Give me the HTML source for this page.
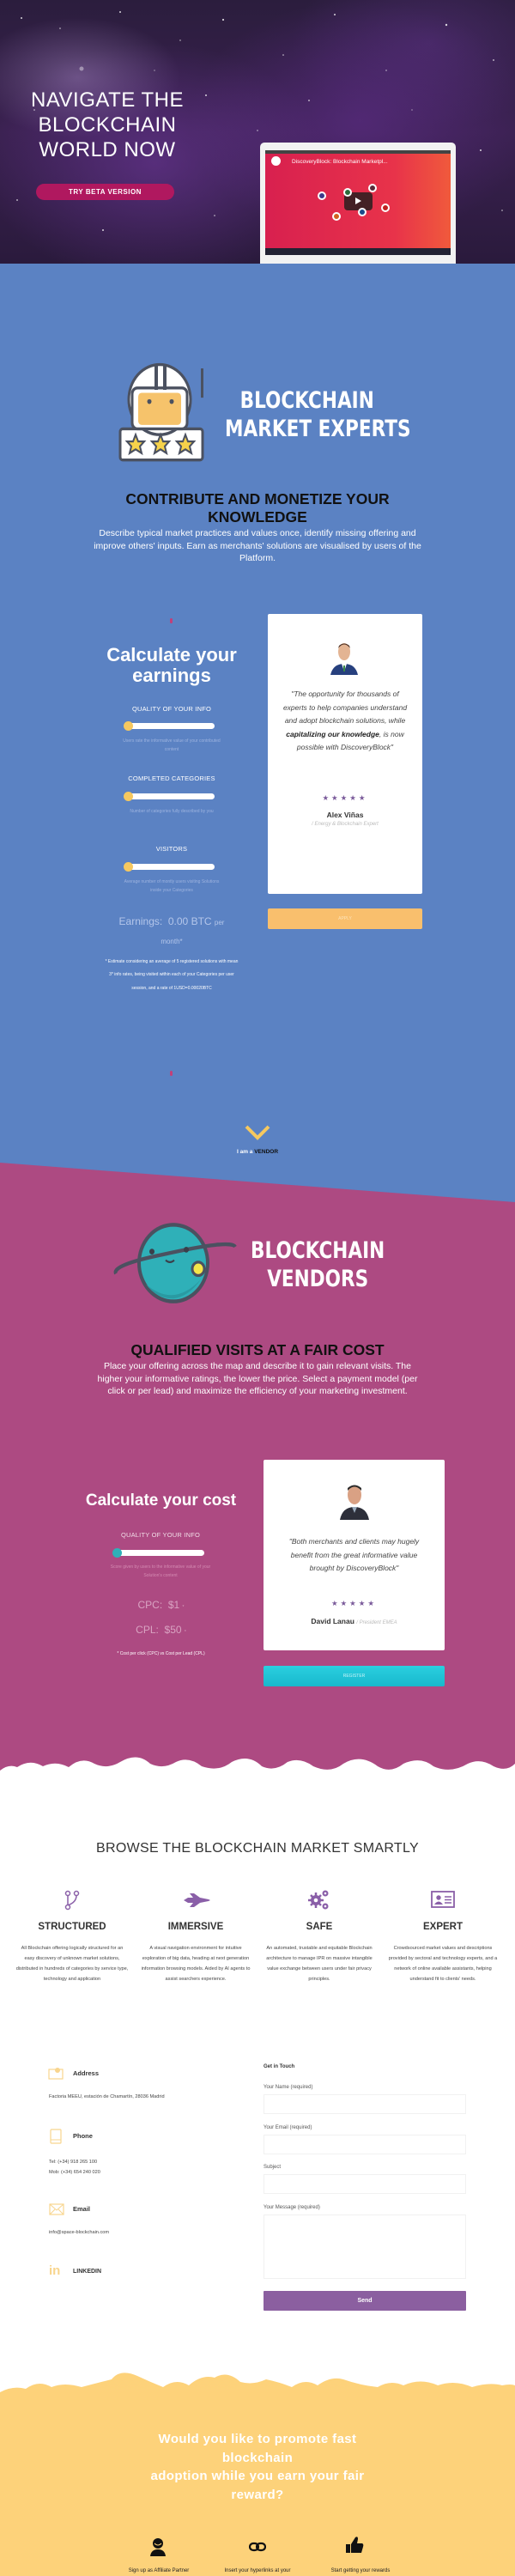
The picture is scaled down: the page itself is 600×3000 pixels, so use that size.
<!DOCTYPE html>
<html><head><meta charset="utf-8"><style>
*{margin:0;padding:0;box-sizing:border-box}
body{width:600px;height:3000px;position:relative;overflow:hidden;font-family:"Liberation Sans",sans-serif;background:#fff}
.a{position:absolute}
.c{text-align:center}
.slider{position:absolute;height:7px;background:#fff;border-radius:4px}
.slider i{position:absolute;left:-2px;top:-2px;width:11px;height:11px;border-radius:50%;background:#f6c85f}
.lbl{font-size:7.5px;color:#fff;letter-spacing:.2px}
.sm{font-size:5px;color:#9db3df;line-height:10px}
.inp{position:absolute;left:307px;width:236px;height:23px;border:1px solid #f1f1f1;background:#fff}
.fl{position:absolute;left:307px;font-size:6px;color:#555}
.hand{font-family:'DejaVu Sans',sans-serif;font-weight:bold;color:#fff;white-space:nowrap;transform-origin:0 0}
</style></head><body>

<!-- HERO -->
<div class="a" style="left:0;top:0;width:600px;height:307px;background:radial-gradient(ellipse 120px 70px at 90px 90px,rgba(170,140,200,.45),transparent),radial-gradient(ellipse 200px 140px at 180px 190px,rgba(120,60,170,.5),transparent),radial-gradient(ellipse 200px 140px at 420px 140px,rgba(110,50,160,.45),transparent),radial-gradient(ellipse 160px 100px at 500px 50px,rgba(90,50,130,.5),transparent),linear-gradient(#2b1d3d,#3a2150 50%,#2a1a3c)"></div>
<svg class="a" style="left:0;top:0" width="600" height="307">
<g fill="#fff" opacity=".8">
<circle cx="25" cy="21" r="1"/><circle cx="70" cy="33" r=".8"/><circle cx="140" cy="14" r="1"/><circle cx="210" cy="47" r=".7"/><circle cx="260" cy="23" r="1.1"/><circle cx="330" cy="64" r=".8"/><circle cx="390" cy="17" r="1"/><circle cx="450" cy="82" r=".7"/><circle cx="520" cy="29" r="1.2"/><circle cx="575" cy="70" r=".9"/><circle cx="40" cy="128" r=".8"/><circle cx="240" cy="111" r="1"/><circle cx="300" cy="152" r=".7"/><circle cx="560" cy="175" r="1"/><circle cx="20" cy="233" r=".9"/><circle cx="120" cy="268" r="1"/><circle cx="250" cy="251" r=".8"/><circle cx="585" cy="245" r=".8"/><circle cx="180" cy="82" r=".6"/><circle cx="360" cy="117" r=".9"/><circle cx="480" cy="128" r=".6"/><circle cx="95" cy="80" r="2.5" opacity=".5"/></g></svg>
<div class="a c" style="left:20px;top:102px;width:210px;color:#fff;font-size:24px;line-height:29px;letter-spacing:.5px">NAVIGATE THE<br>BLOCKCHAIN<br>WORLD NOW</div>
<div class="a c" style="left:42px;top:214px;width:161px;height:19px;border-radius:10px;background:#b0185f;color:#fff;font-size:8px;font-weight:bold;line-height:19px;letter-spacing:.5px">TRY BETA VERSION</div>
<!-- laptop -->
<div class="a" style="left:303px;top:166px;width:228px;height:143px;background:#f2f2f2;border-radius:5px 5px 0 0"></div>
<div class="a" style="left:275px;top:307px;width:284px;height:7px;background:#e4e4e4;border-radius:0 0 30px 30px"></div>
<div class="a" style="left:309px;top:175px;width:216px;height:122px;background:linear-gradient(90deg,#d8204f,#e8334a 70%,#f05a3c)"></div>
<div class="a" style="left:309px;top:175px;width:216px;height:4px;background:#444"></div>
<div class="a" style="left:309px;top:289px;width:216px;height:8px;background:#223"></div>
<div class="a" style="left:316px;top:182px;width:11px;height:11px;border-radius:50%;background:#fff"></div>
<div class="a" style="left:340px;top:185px;color:#fff;font-size:6.5px;white-space:nowrap">DiscoveryBlock: Blockchain Marketpl...</div>
<div class="a" style="left:401px;top:224px;width:33px;height:21px;border-radius:4px;background:rgba(40,30,30,.85)"></div>
<div class="a" style="left:414px;top:230px;width:0;height:0;border-left:7px solid #fff;border-top:4.5px solid transparent;border-bottom:4.5px solid transparent"></div>
<svg class="a" style="left:309px;top:175px" width="216" height="115"><g fill="#fff"><circle cx="66" cy="53" r="5"/><circle cx="96" cy="49" r="5"/><circle cx="125" cy="44" r="5"/><circle cx="83" cy="77" r="5"/><circle cx="113" cy="72" r="5"/><circle cx="140" cy="67" r="5"/></g><g><circle cx="66" cy="53" r="3" fill="#3b3a8a"/><circle cx="96" cy="49" r="3" fill="#2a6a3a"/><circle cx="125" cy="44" r="3" fill="#5a2a3a"/><circle cx="83" cy="77" r="3" fill="#d06020"/><circle cx="113" cy="72" r="3" fill="#1a4a8a"/><circle cx="140" cy="67" r="3" fill="#c02020"/></g></svg>

<!-- BLUE SECTION -->
<div class="a" style="left:0;top:307px;width:600px;height:1100px;background:#5b82c3"></div>
<svg class="a" style="left:136px;top:420px" width="106" height="118" viewBox="0 0 106 104" preserveAspectRatio="none">
<rect x="4" y="70" width="96" height="32" rx="3" fill="#fff" stroke="#4b5160" stroke-width="3"/>
<rect x="98" y="8" width="3" height="30" fill="#4b5160"/>
<ellipse cx="50" cy="40" rx="36" ry="36" fill="#fff" stroke="#4b5160" stroke-width="3"/>
<rect x="18" y="28" width="64" height="42" rx="6" fill="#fff" stroke="#4b5160" stroke-width="3"/>
<rect x="25" y="33" width="50" height="33" rx="4" fill="#f6c36b"/>
<rect x="44" y="4" width="4" height="26" fill="#4b5160"/><rect x="54" y="4" width="4" height="26" fill="#4b5160"/>
<circle cx="38" cy="42" r="2.5" fill="#4b5160"/><circle cx="64" cy="42" r="2.5" fill="#4b5160"/>
<g fill="#f6d24a" stroke="#4b5160" stroke-width="2"><polygon points="22,76 25,83 32,83 27,88 29,95 22,91 15,95 17,88 12,83 19,83"/><polygon points="51,76 54,83 61,83 56,88 58,95 51,91 44,95 46,88 41,83 48,83"/><polygon points="80,76 83,83 90,83 85,88 87,95 80,91 73,95 75,88 70,83 77,83"/></g>
</svg>
<div class="a hand" style="left:262px;top:450px;font-size:27px;line-height:33px;transform:scaleX(.8)"><span style="padding-left:22px">BLOCKCHAIN</span><br>MARKET EXPERTS</div>
<div class="a c" style="left:80px;top:571px;width:440px;font-weight:bold;font-size:17.5px;line-height:21px;color:#111">CONTRIBUTE AND MONETIZE YOUR<br>KNOWLEDGE</div>
<div class="a c" style="left:106px;top:614px;width:388px;font-size:10.5px;line-height:14.5px;color:#fff">Describe typical market practices and values once, identify missing offering and improve others' inputs. Earn as merchants' solutions are visualised by users of the Platform.</div>

<div class="a" style="left:198px;top:720px;width:3px;height:6px;background:#c2407a;border-radius:2px"></div>
<div class="a c" style="left:100px;top:751px;width:200px;color:#fff;font-weight:bold;font-size:22px;line-height:24px">Calculate your<br>earnings</div>
<div class="a c lbl" style="left:100px;top:821px;width:200px">QUALITY OF YOUR INFO</div>
<div class="slider" style="left:146px;top:842px;width:104px"><i></i></div>
<div class="a c sm" style="left:140px;top:858px;width:120px">Users rate the informative value of your contributed content</div>
<div class="a c lbl" style="left:100px;top:902px;width:200px">COMPLETED CATEGORIES</div>
<div class="slider" style="left:146px;top:924px;width:104px"><i></i></div>
<div class="a c sm" style="left:140px;top:940px;width:120px">Number of categories fully described by you</div>
<div class="a c lbl" style="left:100px;top:984px;width:200px">VISITORS</div>
<div class="slider" style="left:146px;top:1006px;width:104px"><i></i></div>
<div class="a c sm" style="left:140px;top:1022px;width:120px">Average number of montly users visiting Solutions inside your Categories</div>
<div class="a c" style="left:120px;top:1063px;width:160px;color:#b4c6ea;font-size:12px;line-height:21px">Earnings: &nbsp;0.00 BTC <span style="font-size:8px">per<br>month*</span></div>
<div class="a c" style="left:122px;top:1113px;width:156px;color:#fff;font-size:5px;line-height:15.3px">* Estimate considering an average of 5 registered solutions with mean 3* info rates, being visited within each of your Categories per user session, and a rate of 1USD=0.00020BTC</div>
<!-- card 1 -->
<div class="a" style="left:312px;top:715px;width:180px;height:326px;background:#fff;border-radius:2px"></div>
<svg class="a" style="left:384px;top:746px" width="34" height="40"><ellipse cx="17" cy="13" rx="7" ry="10" fill="#e3b493"/><path d="M10 9 Q17 0 24 9 L23 6 Q17 1 11 6Z" fill="#4a2e22"/><path d="M1 40 Q4 27 17 27 Q30 27 33 40Z" fill="#27407e"/><path d="M14 27 L17 36 L20 27Z" fill="#fff"/><rect x="16" y="29" width="2" height="7" fill="#3a8a4a"/></svg>
<div class="a c" style="left:325px;top:801px;width:154px;font-style:italic;color:#444;font-size:8.5px;line-height:15.5px">"The opportunity for thousands of experts to help companies understand and adopt blockchain solutions, while <b style="color:#222">capitalizing our knowledge</b>, is now possible with DiscoveryBlock"</div>
<div class="a c" style="left:312px;top:924px;width:180px;color:#7a5a9a;font-size:8.5px;letter-spacing:3px">★★★★★</div>
<div class="a c" style="left:312px;top:944px;width:180px;color:#333;font-weight:bold;font-size:8.5px">Alex Viñas</div>
<div class="a c" style="left:312px;top:957px;width:180px;color:#bbb;font-style:italic;font-size:6px">/ Energy &amp; Blockchain Expert</div>
<div class="a c" style="left:312px;top:1058px;width:180px;height:24px;background:#f9bf6d;border-radius:2px;color:#fde3b8;font-size:5px;line-height:24px">APPLY</div>
<div class="a" style="left:198px;top:1247px;width:3px;height:6px;background:#c2407a;border-radius:2px"></div>
<svg class="a" style="left:284px;top:1309px" width="32" height="20"><path d="M3 3 L16 16 L29 3" stroke="#f6c85f" stroke-width="4" fill="none"/></svg>
<div class="a c" style="left:250px;top:1338px;width:100px;font-size:6.5px;font-weight:bold;color:#fff">I am a <span style="color:#111">VENDOR</span></div>

<!-- PINK SECTION -->
<svg class="a" style="left:0;top:1350px" width="600" height="730"><polygon points="0,4 600,50 600,730 0,730" fill="#ad4a82"/></svg>
<svg class="a" style="left:130px;top:1423px" width="146" height="96" viewBox="0 0 146 86" preserveAspectRatio="none">
<circle cx="72" cy="43" r="40" fill="#2fb0b8" stroke="#4b5160" stroke-width="4"/>
<path d="M40 65 Q72 90 104 60 Q90 78 72 80 Q52 80 40 65Z" fill="#2a9aa2"/>
<path d="M5 54 Q0 45 60 34 Q140 18 144 26" stroke="#4b5160" stroke-width="4" fill="none"/>
<circle cx="47" cy="31" r="3" fill="#3a3f4a"/><circle cx="87" cy="29" r="3" fill="#3a3f4a"/>
<path d="M63 40 Q68 44 73 40" stroke="#3a3f4a" stroke-width="2" fill="none"/>
<circle cx="101" cy="49" r="7" fill="#f5e64a" stroke="#4b5160" stroke-width="3"/>
</svg>
<div class="a hand" style="left:292px;top:1440px;font-size:27px;line-height:33px;transform:scaleX(.8)">BLOCKCHAIN<br><span style="padding-left:24px">VENDORS</span></div>
<div class="a c" style="left:80px;top:1562px;width:440px;font-weight:bold;font-size:17.5px;color:#111">QUALIFIED VISITS AT A FAIR COST</div>
<div class="a c" style="left:106px;top:1584px;width:388px;font-size:10.5px;line-height:14.5px;color:#fff">Place your offering across the map and describe it to gain relevant visits. The higher your informative ratings, the lower the price. Select a payment model (per click or per lead) and maximize the efficiency of your marketing investment.</div>
<div class="a c" style="left:80px;top:1737px;width:215px;color:#fff;font-weight:bold;font-size:19px">Calculate your cost</div>
<div class="a c lbl" style="left:87px;top:1783px;width:200px;color:#f1dce7">QUALITY OF YOUR INFO</div>
<div class="slider" style="left:133px;top:1805px;width:105px"><i style="background:#2fb0b8"></i></div>
<div class="a c sm" style="left:127px;top:1820px;width:120px;color:#d48ab2">Score given by users to the informative value of your Solution's content</div>
<div class="a c" style="left:120px;top:1862px;width:135px;color:#d9a3c2;font-size:12px">CPC: &nbsp;$1 <span style="font-size:5px">*</span></div>
<div class="a c" style="left:120px;top:1891px;width:135px;color:#d9a3c2;font-size:12px">CPL: &nbsp;$50 <span style="font-size:5px">*</span></div>
<div class="a c" style="left:100px;top:1923px;width:175px;color:#fff;font-size:5px">* Cost per click (CPC) vs Cost per Lead (CPL)</div>
<div class="a" style="left:307px;top:1700px;width:211px;height:222px;background:#fff;border-radius:2px"></div>
<svg class="a" style="left:396px;top:1726px" width="34" height="44"><ellipse cx="17" cy="15" rx="8" ry="11" fill="#d9a184"/><path d="M9 10 Q17 1 25 10 L25 7 Q17 0 9 7Z" fill="#2a2a2a"/><path d="M0 44 Q3 29 17 29 Q31 29 34 44Z" fill="#2d2f3a"/><path d="M14 29 L17 36 L20 29Z" fill="#9ab"/></svg>
<div class="a c" style="left:330px;top:1788px;width:165px;font-style:italic;color:#444;font-size:8.5px;line-height:15.5px">"Both merchants and clients may hugely benefit from the great informative value brought by DiscoveryBlock"</div>
<div class="a c" style="left:307px;top:1862px;width:211px;color:#7a5a9a;font-size:8.5px;letter-spacing:3px">★★★★★</div>
<div class="a c" style="left:307px;top:1883px;width:211px;color:#333;font-weight:bold;font-size:8.5px">David Lanau <span style="color:#bbb;font-weight:normal;font-style:italic;font-size:6px">/ President EMEA</span></div>
<div class="a c" style="left:307px;top:1940px;width:211px;height:24px;background:linear-gradient(#2ad0e0,#18b8cc);border-radius:2px;color:#c8f4f8;font-size:5px;line-height:24px">REGISTER</div>
<svg class="a" style="left:0;top:2040px" width="600" height="60"><path d="M0 22 Q10 14 20 18 Q35 8 50 17 Q65 10 80 18 Q95 5 110 14 Q125 21 140 12 Q160 0 175 14 Q190 21 205 12 Q220 5 235 17 Q255 24 270 12 Q290 2 305 17 Q320 24 335 12 Q350 6 365 17 Q385 26 400 14 Q420 2 440 17 Q455 26 470 14 Q490 5 505 17 Q525 26 545 14 Q560 7 575 17 Q590 24 600 14 L600 60 L0 60Z" fill="#fff"/></svg>

<!-- BROWSE -->
<div class="a c" style="left:0;top:2144px;width:600px;font-size:16px;color:#333;letter-spacing:.3px">BROWSE THE BLOCKCHAIN MARKET SMARTLY</div>
<svg class="a" style="left:74px;top:2201px" width="20" height="24"><circle cx="5" cy="4" r="2.5" fill="none" stroke="#8a5fa8" stroke-width="1.5"/><circle cx="15" cy="4" r="2.5" fill="none" stroke="#8a5fa8" stroke-width="1.5"/><circle cx="5" cy="20" r="2.5" fill="none" stroke="#8a5fa8" stroke-width="1.5"/><path d="M5 6.5 V17.5 M15 6.5 Q15 14 6 17.5" stroke="#8a5fa8" stroke-width="1.5" fill="none"/></svg>
<svg class="a" style="left:213px;top:2205px" width="32" height="16"><path d="M1 8 L6 5 L12 5 L8 0 L13 0 L20 5 L30 7 L32 8 L30 9 L20 11 L13 16 L8 16 L12 11 L6 11Z" fill="#8a5fa8"/></svg>
<svg class="a" style="left:358px;top:2200px" width="28" height="26"><g fill="#8a5fa8"><circle cx="10" cy="13" r="6"/><circle cx="21" cy="5" r="3.5"/><circle cx="21" cy="20" r="3.5"/></g><g stroke="#8a5fa8" stroke-width="2.5"><path d="M10 4 V22 M1 13 H19 M4 7 L16 19 M16 7 L4 19"/></g><circle cx="10" cy="13" r="2.3" fill="#fff"/><circle cx="21" cy="5" r="1.3" fill="#fff"/><circle cx="21" cy="20" r="1.3" fill="#fff"/></svg>
<svg class="a" style="left:502px;top:2202px" width="28" height="22"><rect x="1" y="1" width="26" height="18" fill="none" stroke="#8a5fa8" stroke-width="1.8"/><circle cx="9" cy="8" r="2.7" fill="#8a5fa8"/><path d="M4 16 Q9 9 14 16Z" fill="#8a5fa8"/><path d="M16 7 H24 M16 10.5 H24 M16 14 H24" stroke="#8a5fa8" stroke-width="1.5"/></svg>
<div class="a c" style="left:12px;top:2238px;width:144px;font-weight:bold;font-size:11.5px;color:#333">STRUCTURED</div>
<div class="a c" style="left:156px;top:2238px;width:144px;font-weight:bold;font-size:11.5px;color:#333">IMMERSIVE</div>
<div class="a c" style="left:300px;top:2238px;width:144px;font-weight:bold;font-size:11.5px;color:#333">SAFE</div>
<div class="a c" style="left:444px;top:2238px;width:144px;font-weight:bold;font-size:11.5px;color:#333">EXPERT</div>
<div class="a c" style="left:18px;top:2263px;width:132px;font-size:5.6px;line-height:12px;color:#444">All Blockchain offering logically structured for an easy discovery of unknown market solutions, distributed in hundreds of categories by service type, technology and application</div>
<div class="a c" style="left:162px;top:2263px;width:132px;font-size:5.6px;line-height:12px;color:#444">A visual navigation environment for intuitive exploration of big data, heading at next generation information browsing models. Aided by AI agents to assist searchers experience.</div>
<div class="a c" style="left:306px;top:2263px;width:132px;font-size:5.6px;line-height:12px;color:#444">An automated, trustable and equitable Blockchain architecture to manage IPR on massive intangible value exchange between users under fair privacy principles.</div>
<div class="a c" style="left:450px;top:2263px;width:132px;font-size:5.6px;line-height:12px;color:#444">Crowdsourced market values and descriptions provided by sectoral and technology experts, and a network of online available assistants, helping understand fit to clients' needs.</div>

<!-- CONTACT -->
<svg class="a" style="left:56px;top:2406px" width="18" height="16"><rect x="1" y="4" width="16" height="11" fill="none" stroke="#f8d58e" stroke-width="1.2"/><circle cx="11" cy="5" r="3" fill="#f8d58e"/></svg>
<div class="a" style="left:85px;top:2410px;font-weight:bold;font-size:7.5px;color:#333">Address</div>
<div class="a" style="left:57px;top:2439px;font-size:5.6px;color:#444">Factoria MEEU, estación de Chamartín, 28036 Madrid</div>
<svg class="a" style="left:58px;top:2479px" width="14" height="18"><rect x="1" y="1" width="12" height="16" rx="1" fill="none" stroke="#f8d58e" stroke-width="1.2"/><path d="M1 13 H13" stroke="#f8d58e"/></svg>
<div class="a" style="left:85px;top:2483px;font-weight:bold;font-size:7.5px;color:#333">Phone</div>
<div class="a" style="left:57px;top:2512px;font-size:5.6px;line-height:12px;color:#444">Tel: (+34) 918 265 100<br>Mob: (+34) 654 240 020</div>
<svg class="a" style="left:57px;top:2566px" width="18" height="14"><rect x="1" y="1" width="16" height="12" fill="none" stroke="#f8d58e" stroke-width="1.2"/><path d="M1 1 L9 8 L17 1 M1 13 L7 7 M17 13 L11 7" stroke="#f8d58e" fill="none"/></svg>
<div class="a" style="left:85px;top:2568px;font-weight:bold;font-size:7.5px;color:#333">Email</div>
<div class="a" style="left:57px;top:2597px;font-size:5.6px;color:#444">info@space-blockchain.com</div>
<div class="a" style="left:57px;top:2636px;font-weight:bold;font-size:15px;color:#f8d58e">in</div>
<div class="a" style="left:85px;top:2642px;font-weight:bold;font-size:7px;color:#333">LINKEDIN</div>
<div class="fl" style="top:2404px;font-weight:bold;color:#333">Get in Touch</div>
<div class="fl" style="top:2428px">Your Name (required)</div>
<div class="inp" style="top:2439px"></div>
<div class="fl" style="top:2475px">Your Email (required)</div>
<div class="inp" style="top:2486px"></div>
<div class="fl" style="top:2521px">Subject</div>
<div class="inp" style="top:2532px"></div>
<div class="fl" style="top:2568px">Your Message (required)</div>
<div class="inp" style="top:2579px;height:75px"></div>
<div class="a c" style="left:307px;top:2668px;width:236px;height:23px;background:#8b5fa0;color:#fff;font-weight:bold;font-size:7px;line-height:23px;border-radius:1px">Send</div>

<!-- YELLOW -->
<svg class="a" style="left:0;top:2758px" width="600" height="242"><path d="M0 28 Q15 20 30 24 Q45 13 60 22 Q75 16 95 22 Q110 18 130 13 Q140 0 160 9 Q175 16 190 22 Q205 11 220 20 Q235 7 250 11 Q265 2 280 16 Q295 20 310 13 Q325 16 340 22 Q355 11 370 20 Q385 9 400 13 Q420 20 440 22 Q455 13 470 20 Q490 11 510 20 Q530 13 550 22 Q570 16 585 20 Q595 18 600 20 L600 242 L0 242Z" fill="#fdd27a"/></svg>
<div class="a c" style="left:120px;top:2830px;width:360px;color:#fff;font-weight:bold;font-size:15px;line-height:21.7px;letter-spacing:.4px">Would you like to promote fast<br>blockchain<br>adoption while you earn your fair<br>reward?</div>
<svg class="a" style="left:174px;top:2955px" width="20" height="22"><circle cx="10" cy="7" r="6" fill="#111"/><path d="M6 7 Q10 11 14 7" stroke="#fdd27a" fill="none"/><path d="M1 22 Q2 14 10 14 Q18 14 19 22Z" fill="#111"/></svg>
<svg class="a" style="left:290px;top:2960px" width="20" height="12"><rect x="1" y="2" width="10" height="8" rx="4" fill="none" stroke="#111" stroke-width="2.2"/><rect x="9" y="2" width="10" height="8" rx="4" fill="none" stroke="#111" stroke-width="2.2"/></svg>
<svg class="a" style="left:402px;top:2953px" width="22" height="22"><rect x="1" y="10" width="5" height="10" fill="#111"/><path d="M7 10 L12 2 Q15 0 15 4 L14 9 L20 9 Q22 10 21 13 L19 20 L7 20Z" fill="#111"/></svg>
<div class="a c" style="left:135px;top:2991px;width:100px;font-size:6px;color:#222">Sign up as Affiliate Partner</div>
<div class="a c" style="left:240px;top:2991px;width:120px;font-size:6px;color:#222">Insert your hyperlinks at your</div>
<div class="a c" style="left:365px;top:2991px;width:110px;font-size:6px;color:#222">Start getting your rewards</div>
</body></html>
